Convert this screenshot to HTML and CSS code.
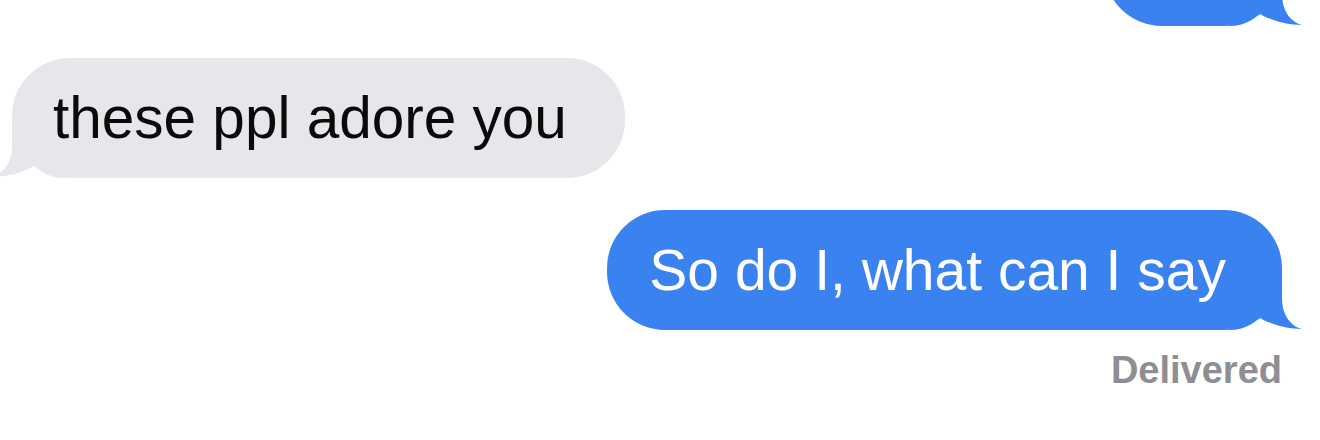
FILE: index.html
```html
<!DOCTYPE html>
<html lang="en">
<head>
<meta charset="utf-8">
<title>Messages</title>
<link rel="stylesheet" href="styles.css">
</head>
<body>
<main class="thread">
  <div class="msg msg-out msg-prev">
    <div class="bubble bubble-out bubble-empty">
      <svg class="tail tail-out" viewBox="0 0 74 60" aria-hidden="true"><path d="M0 0 H52 V28 C52 44 60 56 72 59 C56 59 40 54 30 48 C22 54 14 60 0 60 Z"/></svg>
    </div>
  </div>
  <div class="msg msg-in">
    <div class="bubble bubble-in">these ppl adore you
      <svg class="tail tail-in" viewBox="0 0 74 60" aria-hidden="true"><path d="M74 0 H22 V28 C22 44 14 56 2 59 C18 59 34 54 44 48 C52 54 60 60 74 60 Z"/></svg>
    </div>
  </div>
  <div class="msg msg-out">
    <div class="bubble bubble-out">So do I, what can I say
      <svg class="tail tail-out" viewBox="0 0 74 60" aria-hidden="true"><path d="M0 0 H52 V28 C52 44 60 56 72 59 C56 59 40 54 30 48 C22 54 14 60 0 60 Z"/></svg>
    </div>
    <div class="status">Delivered</div>
  </div>
</main>
</body>
</html>
```
FILE: styles.css
```css
html, body {
  margin: 0;
  padding: 0;
  background: #ffffff;
}
body {
  width: 1320px;
  height: 440px;
  overflow: hidden;
  font-family: "Liberation Sans", Arial, Helvetica, sans-serif;
}
.thread {
  display: flex;
  flex-direction: column;
  gap: 32px;
  padding: 0 38px 0 12px;
}
.msg {
  display: flex;
  flex-direction: column;
}
.msg-in {
  align-items: flex-start;
}
.msg-out {
  align-items: flex-end;
}
.msg-prev {
  margin-top: -94px;
}
.bubble {
  position: relative;
  isolation: isolate;
  height: 120px;
  line-height: 120px;
  font-size: 57px;
  border-radius: 58px;
  white-space: nowrap;
  box-sizing: border-box;
}
.bubble-in {
  background: #e6e6eb;
  color: #0a0a0a;
  font-size: 58.5px;
  padding: 0 58px 0 41px;
}
.bubble-out {
  background: #3b82f1;
  color: #ffffff;
  padding: 0 56px 0 42px;
}
.bubble-empty {
  width: 178px;
}
.tail {
  position: absolute;
  z-index: -1;
  bottom: 0;
  width: 74px;
  height: 60px;
}
.tail-out {
  right: -22px;
  fill: #3b82f1;
}
.tail-in {
  left: -22px;
  fill: #e6e6eb;
}
.status {
  margin-top: 20px;
  font-size: 38px;
  line-height: 40px;
  font-weight: 700;
  color: #8e8e93;
}
```
